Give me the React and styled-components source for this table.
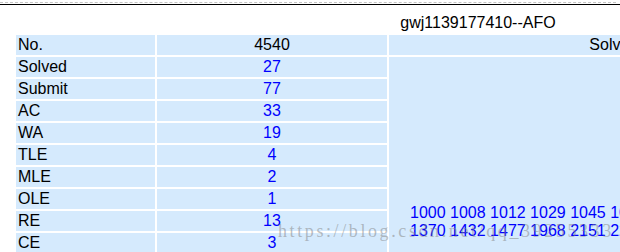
import React from 'react';
import styled, { createGlobalStyle } from 'styled-components';

const GlobalStyle = createGlobalStyle`
  html, body {
    margin: 0;
    padding: 0;
    background: #ffffff;
    overflow: hidden;
  }
  body {
    font-family: "Liberation Sans", Arial, sans-serif;
    font-size: 16px;
    color: #000000;
  }
`;

const Page = styled.div`
  position: relative;
  width: 620px;
  height: 252px;
  overflow: hidden;
`;

const DashRule = styled.div`
  height: 2px;
  margin-right: 4px;
  border-bottom: 1px dashed #c4c4c4;
`;

const BlackRule = styled.div`
  height: 1px;
  margin-top: 1px;
  background: #000000;
`;

const StatusTable = styled.table`
  margin-left: 14px;
  width: 928px;
  table-layout: fixed;
  border-collapse: separate;
  border-spacing: 2px;
`;

const Caption = styled.caption`
  padding: 9px 0 1px;
  line-height: 18px;
  text-align: center;
`;

const Cell = styled.td`
  box-sizing: border-box;
  width: ${(p) => p.$w || 'auto'};
  height: 20px;
  padding: 1px 2px;
  line-height: 18px;
  background: #d5eafd;
  white-space: nowrap;
  text-align: ${(p) => p.$align || 'left'};
  color: ${(p) => (p.$blue ? '#0000ff' : '#000000')};
`;

const ListCell = styled.td`
  padding: 0;
  background: #d5eafd;
  vertical-align: top;
`;

const ProblemList = styled.div`
  box-sizing: border-box;
  height: 196px;
  padding: 147px 0 0 21px;
  color: #0000ff;
  line-height: 18px;
  white-space: nowrap;
`;

const Watermark = styled.div`
  position: absolute;
  left: 278px;
  top: 221px;
  font-family: "Liberation Serif", "Times New Roman", serif;
  font-size: 18px;
  line-height: 20px;
  letter-spacing: 2.6px;
  color: rgba(130, 130, 130, 0.5);
  white-space: nowrap;
  pointer-events: none;
`;

const stats = [
  ['Solved', 27],
  ['Submit', 77],
  ['AC', 33],
  ['WA', 19],
  ['TLE', 4],
  ['MLE', 2],
  ['OLE', 1],
  ['RE', 13],
  ['CE', 3],
];

const solvedLines = [
  '1000 1008 1012 1029 1045 1048 1062 1089 1090 1091 1092 1093 1094 1095',
  '1370 1432 1477 1968 2151 2212 2500 2502 2504 2510 2512 2544 2602 2660',
];

const App = () => {
  return (
    <Page>
      <GlobalStyle />
      <DashRule />
      <BlackRule />
      <StatusTable>
        <Caption>gwj1139177410--AFO</Caption>
        <tbody>
          <tr>
            <Cell $w="139px">No.</Cell>
            <Cell $w="230px" $align="center">4540</Cell>
            <Cell $w="551px" $align="center">Solved Problems List</Cell>
          </tr>
          {stats.map(([label, value], i) => (
            <tr key={label}>
              <Cell>{label}</Cell>
              <Cell $align="center" $blue>{value}</Cell>
              {i === 0 && (
                <ListCell rowSpan={stats.length}>
                  <ProblemList>
                    {solvedLines.map((line) => (
                      <div key={line}>{line}</div>
                    ))}
                  </ProblemList>
                </ListCell>
              )}
            </tr>
          ))}
        </tbody>
      </StatusTable>
      <Watermark>https://blog.csdn.net/qq_39255333</Watermark>
    </Page>
  );
};

export default App;
